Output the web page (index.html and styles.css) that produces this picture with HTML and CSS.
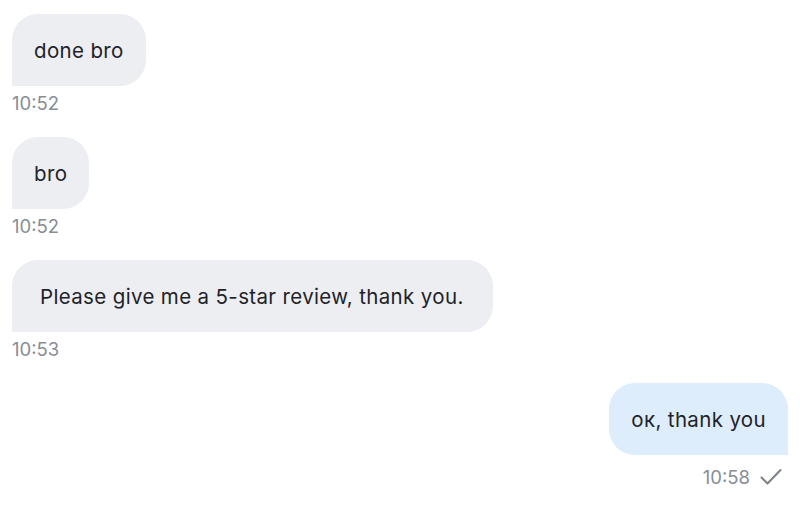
FILE: index.html
```html
<!DOCTYPE html>
<html>
<head>
<meta charset="utf-8">
<link rel="stylesheet" href="styles.css">
</head>
<body>
<div class="chat">
  <div class="msg in">
    <div class="bubble">done bro</div>
    <div class="meta">10:52</div>
  </div>
  <div class="msg in">
    <div class="bubble">bro</div>
    <div class="meta">10:52</div>
  </div>
  <div class="msg in">
    <div class="bubble wide">Please give me a 5-star review, thank you.</div>
    <div class="meta">10:53</div>
  </div>
  <div class="msg out">
    <div class="bubble">ок, thank you</div>
    <div class="meta">10:58
      <svg class="check" width="22" height="18" viewBox="0 0 22 18"><path d="M1.5 9.5 L7.5 15.5 L20.5 2" fill="none" stroke="#7d828a" stroke-width="2" stroke-linecap="round" stroke-linejoin="round"/></svg>
    </div>
  </div>
</div>
</body>
</html>
```
FILE: styles.css
```css
html, body {
  margin: 0;
  padding: 0;
  background: #ffffff;
}
body {
  font-family: Inter, "Noto Sans", sans-serif;
  color: #1f2329;
  width: 800px;
  height: 509px;
  overflow: hidden;
}
.chat {
  display: flex;
  flex-direction: column;
  padding: 14px 12px 0 12px;
  gap: 23px;
}
.msg {
  display: flex;
  flex-direction: column;
  align-items: flex-start;
}
.msg.out {
  align-items: flex-end;
}
.bubble {
  height: 72px;
  box-sizing: border-box;
  display: flex;
  align-items: center;
  padding: 0 22px;
  font-size: 20.5px;
  letter-spacing: 0.35px;
  background: #eceef2;
  border-radius: 26px 26px 26px 0;
}
.bubble.wide {
  padding: 0 29px 0 28px;
}
.msg.out .bubble {
  background: #deedfc;
  border-radius: 26px 26px 0 26px;
}
.meta {
  margin-top: 6px;
  line-height: 22px;
  font-size: 18.5px;
  color: #878d96;
  display: flex;
  align-items: center;
  gap: 10px;
}
.msg.out .meta {
  margin-top: 11px;
  padding-right: 6px;
}
```
